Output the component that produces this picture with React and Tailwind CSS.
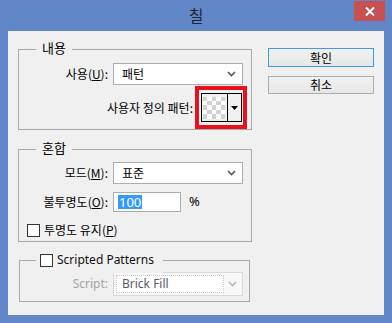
const kr = "font-['Noto_Sans_CJK_KR','Noto_Sans',sans-serif]";

function Chevron({ color = "#555" }) {
  return (
    <svg width="9" height="6" viewBox="0 0 9 6">
      <polyline points="1,1 4.5,4.5 8,1" fill="none" stroke={color} strokeWidth="1.6" />
    </svg>
  );
}

function Select({ value, width = "w-[130px]", height = "h-[22px]" }) {
  return (
    <div className={`${width} ${height} ml-[5px] bg-white border border-[#acacac] flex items-center pl-[8px] pr-[6px]`}>
      <span className="flex-1 text-[12px] leading-none">{value}</span>
      <Chevron />
    </div>
  );
}

function Checker() {
  return (
    <div className="grid grid-cols-5 w-[22px] h-[22px]">
      {Array.from({ length: 25 }).map((_, i) => (
        <div key={i} className={i % 2 === 0 ? "bg-[#d2d2d2]" : "bg-white"} />
      ))}
    </div>
  );
}

export default function App() {
  return (
    <div className={`w-[392px] h-[323px] bg-[#6287c8] flex flex-col ${kr} text-black`}>
      {/* title bar */}
      <div className="h-[31px] relative flex justify-center items-center">
        <span className="text-[16px] text-[#1c2533] mt-[-1px]">칠</span>
        <div className="absolute right-[7px] top-[1px] w-[31px] h-[20px] bg-[#c75050] flex items-center justify-center">
          <svg width="10" height="9" viewBox="0 0 10 9">
            <path d="M1 0.5 L9 8.5 M9 0.5 L1 8.5" stroke="white" strokeWidth="2" />
          </svg>
        </div>
      </div>

      {/* client area */}
      <div className="ml-[8px] w-[376px] h-[284px] bg-[#f0f0f0] flex">
        <div className="w-[244px] pl-[10px] pt-[18px] flex flex-col">
          {/* 내용 */}
          <div className="relative w-[234px] h-[81px] border border-[#a9a9a9]">
            <span className="absolute left-[17px] -top-[11px] px-[6px] bg-[#f0f0f0] text-[13px] leading-[18px]">내용</span>
            <div className="mt-[13px] flex items-center">
              <span className="w-[89px] text-right text-[12px]">
                사용(<span className="underline">U</span>):
              </span>
              <Select value="패턴" />
            </div>
            <div className="mt-[1px] flex items-center justify-end pr-[4px]">
              <span className="text-[12px] mr-[2px]">사용자 정의 패턴:</span>
              <div className="w-[52px] h-[43px] border-[4px] border-[#e8121c] flex items-center justify-center">
                <div className="w-[41px] h-[29px] border border-black flex">
                  <div className="w-[26px] flex items-center justify-center border-r border-black">
                    <Checker />
                  </div>
                  <div className="flex-1 flex items-center justify-center">
                    <svg width="7" height="4" viewBox="0 0 7 4">
                      <polygon points="0,0 7,0 3.5,4" fill="black" />
                    </svg>
                  </div>
                </div>
              </div>
            </div>
          </div>

          {/* 혼합 */}
          <div className="relative mt-[19px] w-[234px] h-[93px] border border-[#a9a9a9]">
            <span className="absolute left-[17px] -top-[11px] px-[6px] bg-[#f0f0f0] text-[13px] leading-[18px]">혼합</span>
            <div className="mt-[12px] flex items-center">
              <span className="w-[89px] text-right text-[12px]">
                모드(<span className="underline">M</span>):
              </span>
              <Select value="표준" />
            </div>
            <div className="mt-[8px] flex items-center">
              <span className="w-[89px] text-right text-[12px]">
                불투명도(<span className="underline">O</span>):
              </span>
              <div className="ml-[5px] w-[68px] h-[20px] bg-white border border-[#acacac] flex items-center pl-[4px]">
                <span className="bg-[#3399ff] text-white text-[13px] leading-[14px] px-[1px] font-['Noto_Sans',sans-serif]">100</span>
              </div>
              <span className="ml-[8px] text-[13px] font-['Noto_Sans',sans-serif]">%</span>
            </div>
            <div className="mt-[9px] pl-[8px] flex items-center">
              <div className="w-[13px] h-[13px] bg-white border border-[#333]" />
              <span className="ml-[4px] text-[12px]">
                투명도 유지(<span className="underline">P</span>)
              </span>
            </div>
          </div>

          {/* Scripted Patterns */}
          <div className="relative mt-[18px] ml-[1px] w-[231px] h-[42px] border border-[#a9a9a9]">
            <div className="absolute left-[16px] -top-[14px] pl-[4px] pr-[9px] bg-[#f0f0f0] flex items-center h-[26px]">
              <div className="w-[13px] h-[13px] bg-white border border-[#333]" />
              <span className="ml-[4px] text-[12px] font-['Noto_Sans',sans-serif] text-[#111]">Scripted Patterns</span>
            </div>
            <div className="mt-[11px] flex items-center">
              <span className="w-[88px] text-right text-[12px] text-[#a3a3a3] font-['Noto_Sans',sans-serif]">Script:</span>
              <div className="ml-[5px] w-[130px] h-[24px] bg-[#f7f7f7] border border-[#d9d9d9] flex items-center p-[2px]">
                <div className="w-[108px] h-full bg-white border border-dotted border-[#c8c8c8] flex items-center pl-[5px]">
                  <span className="text-[12px] text-[#5a5a6e] font-['Noto_Sans',sans-serif]">Brick Fill</span>
                </div>
                <div className="flex-1 flex justify-center">
                  <Chevron color="#b5b5b5" />
                </div>
              </div>
            </div>
          </div>
        </div>

        {/* buttons */}
        <div className="ml-[16px] pt-[17px] flex flex-col">
          <button className="w-[106px] h-[19px] border border-[#3c9bf0] bg-gradient-to-b from-[#f2f2f2] to-[#e6e6e6] text-[12px] leading-none">
            확인
          </button>
          <button className="mt-[9px] w-[106px] h-[18px] border border-[#adadad] bg-gradient-to-b from-[#f2f2f2] to-[#e6e6e6] text-[12px] leading-none">
            취소
          </button>
        </div>
      </div>
    </div>
  );
}
